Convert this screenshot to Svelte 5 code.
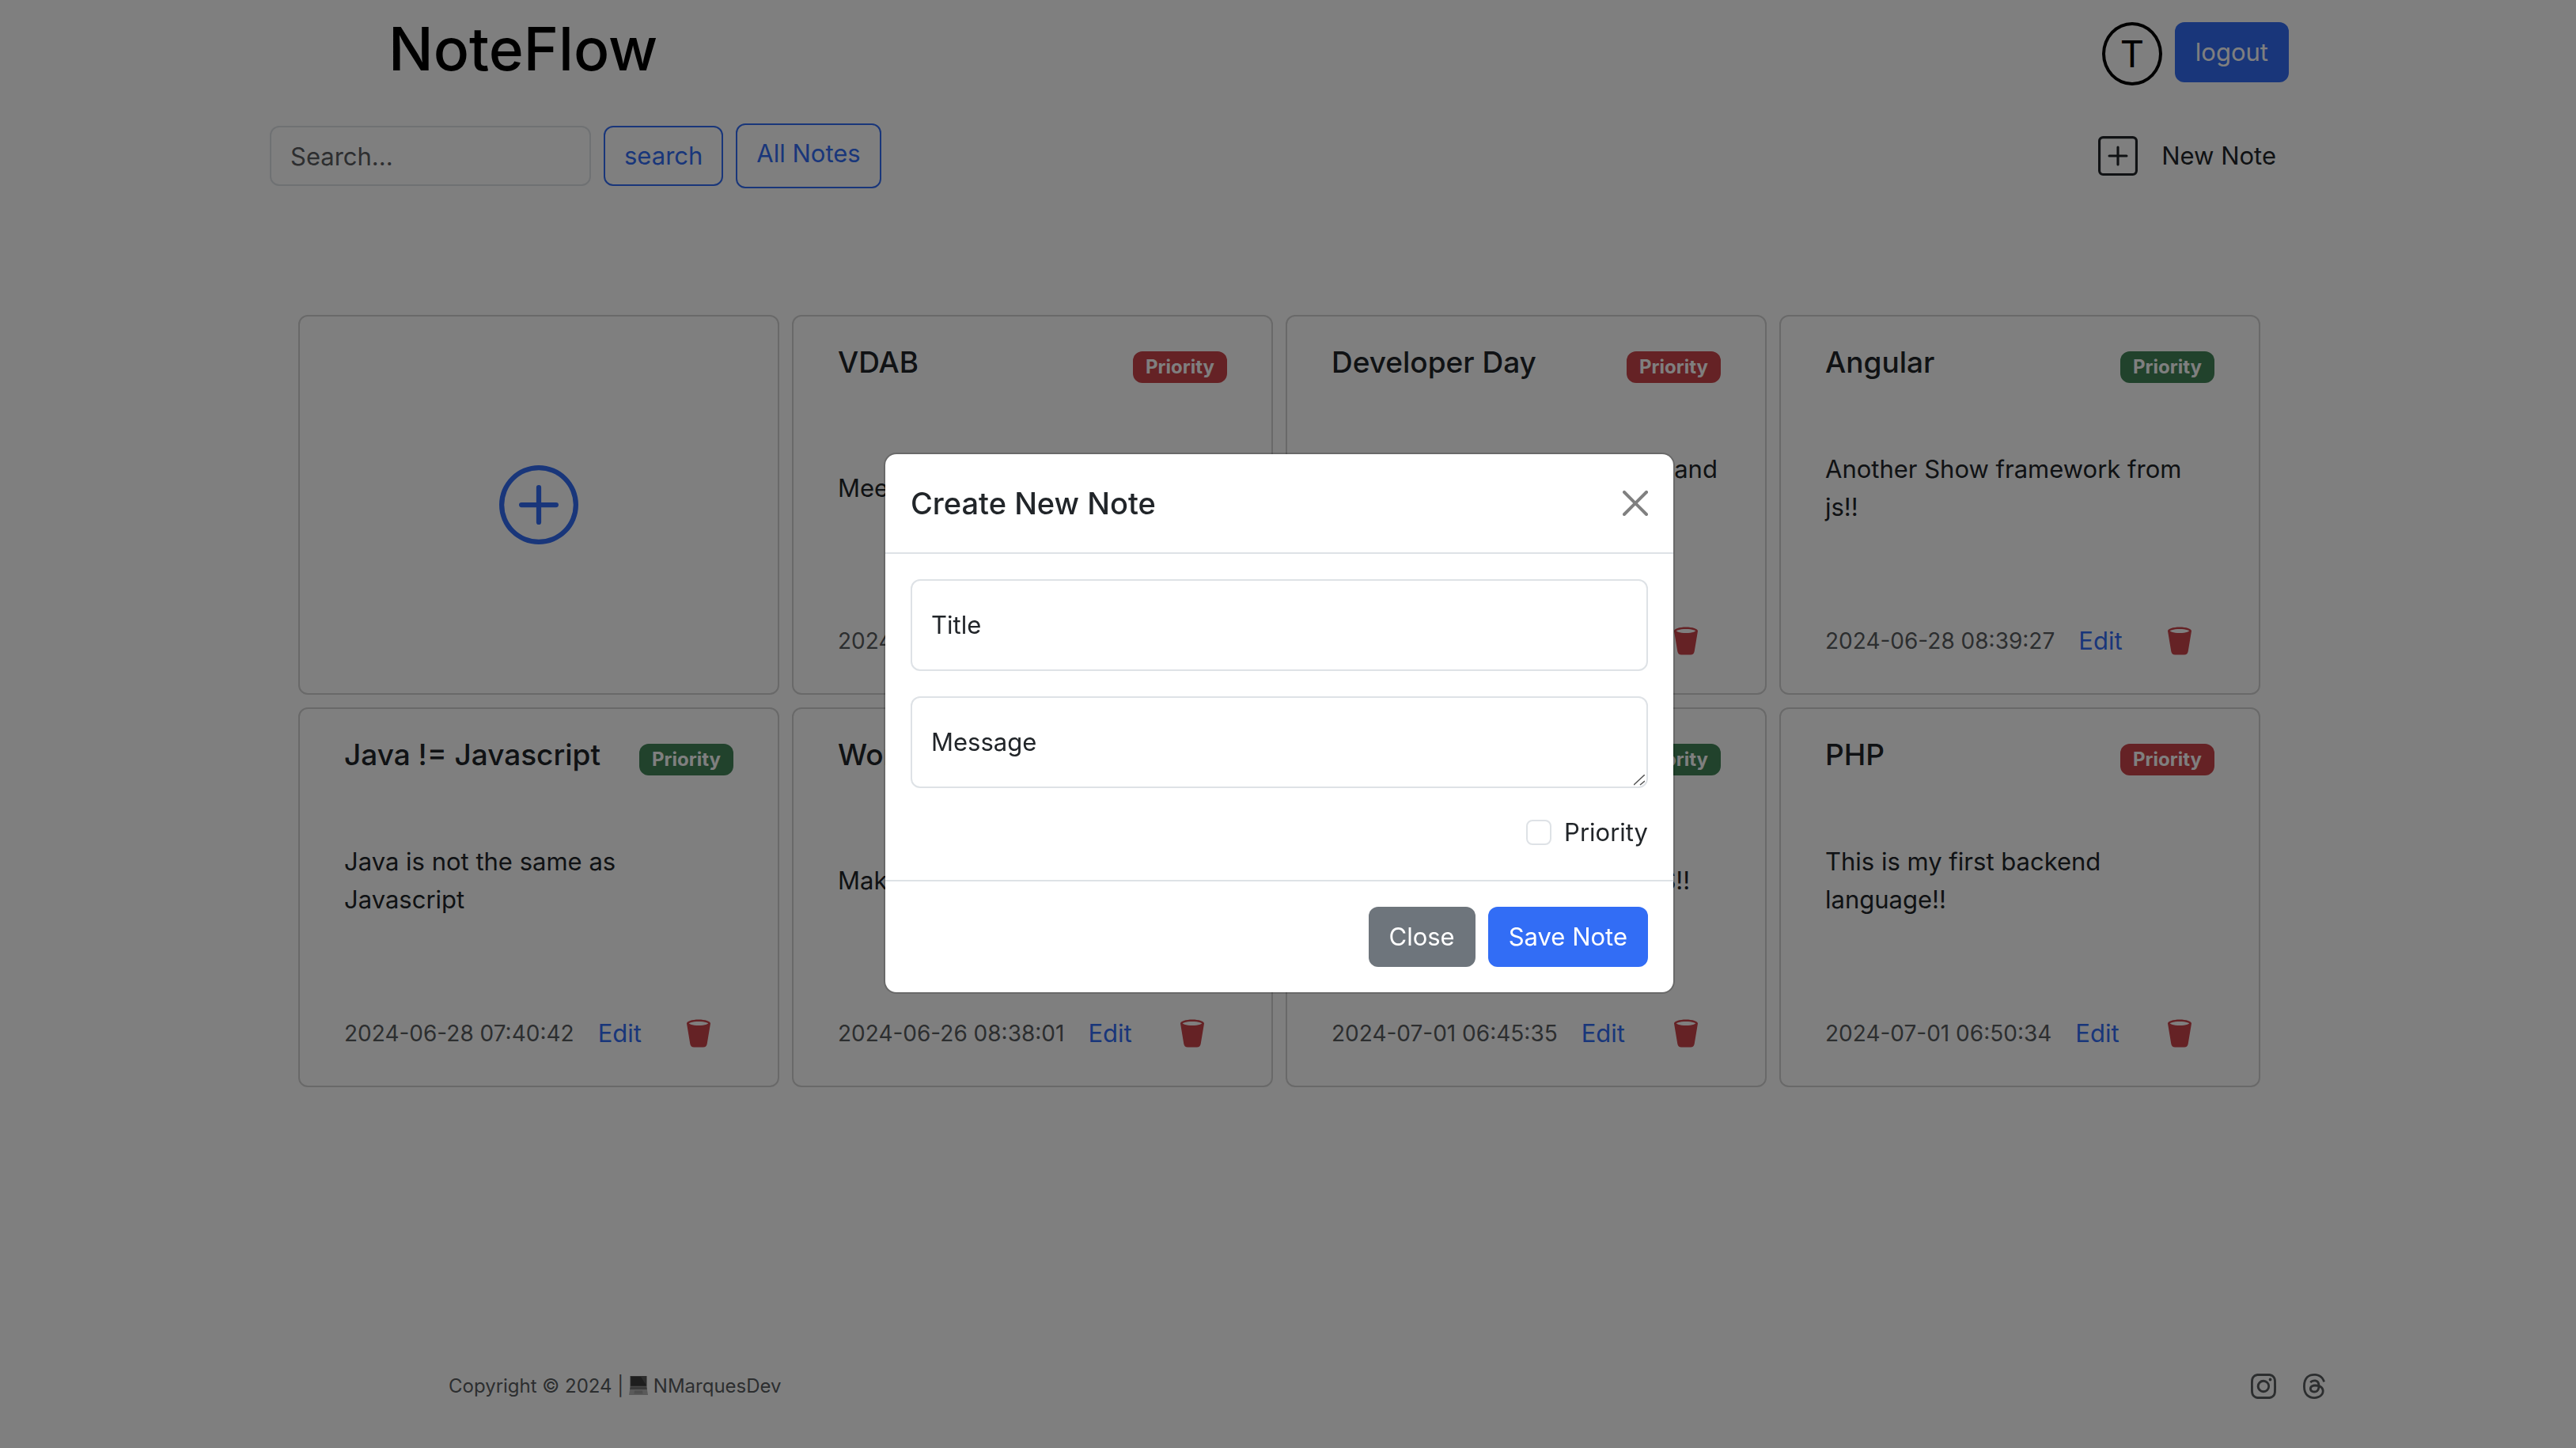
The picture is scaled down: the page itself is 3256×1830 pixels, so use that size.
<script>
  let title = $state('');
  let message = $state('');
  let priority = $state(false);
  let query = $state('');

  const notes = [
    { title: 'VDAB', level: 'high', text: 'Meeting with the coach', date: '2024-06-27 09:12:30' },
    { title: 'Developer Day', level: 'high', text: 'Meet other developers there, and learn new things', date: '2024-06-28 08:36:15' },
    { title: 'Angular', level: 'low', text: 'Another Show framework from js!!', date: '2024-06-28 08:39:27' },
    { title: 'Java != Javascript', level: 'low', text: 'Java is not the same as Javascript', date: '2024-06-28 07:40:42' },
    { title: 'Workout', level: 'high', text: 'Make time for the gym', date: '2024-06-26 08:38:01' },
    { title: 'NextJS', level: 'low', text: 'Rebuild the project on NextJS!!', date: '2024-07-01 06:45:35' },
    { title: 'PHP', level: 'high', text: 'This is my first backend language!!', date: '2024-07-01 06:50:34' }
  ];
</script>

<div class="page">
  <header class="container top">
    <h1>NoteFlow</h1>
    <div class="account">
      <span class="avatar">T</span>
      <button class="btn primary">logout</button>
    </div>
  </header>

  <div class="container toolbar">
    <form class="search">
      <input class="field" type="search" placeholder="Search..." aria-label="Search" bind:value={query} />
      <button class="btn outline" type="button">search</button>
      <a class="btn outline all" href="#all">All Notes</a>
    </form>
    <button class="new-note" type="button">
      <svg viewBox="0 0 16 16" aria-hidden="true">
        <path d="M14 1a1 1 0 0 1 1 1v12a1 1 0 0 1-1 1H2a1 1 0 0 1-1-1V2a1 1 0 0 1 1-1zM2 0a2 2 0 0 0-2 2v12a2 2 0 0 0 2 2h12a2 2 0 0 0 2-2V2a2 2 0 0 0-2-2z" />
        <path d="M8 4a.5.5 0 0 1 .5.5v3h3a.5.5 0 0 1 0 1h-3v3a.5.5 0 0 1-1 0v-3h-3a.5.5 0 0 1 0-1h3v-3A.5.5 0 0 1 8 4" />
      </svg>
      New Note
    </button>
  </div>

  <main class="container grid">
    <button class="card add" type="button" aria-label="Add note">
      <svg viewBox="0 0 16 16" aria-hidden="true">
        <path d="M8 15A7 7 0 1 1 8 1a7 7 0 0 1 0 14m0 1A8 8 0 1 0 8 0a8 8 0 0 0 0 16" />
        <path d="M8 4a.5.5 0 0 1 .5.5v3h3a.5.5 0 0 1 0 1h-3v3a.5.5 0 0 1-1 0v-3h-3a.5.5 0 0 1 0-1h3v-3A.5.5 0 0 1 8 4" />
      </svg>
    </button>
    {#each notes as note}
      <article class="card">
        <div class="card-head">
          <h2>{note.title}</h2>
          <span class="badge {note.level}">Priority</span>
        </div>
        <p>{note.text}</p>
        <div class="card-foot">
          <time>{note.date}</time>
          <a href="#edit">Edit</a>
          <button class="trash" type="button" aria-label="Delete note">
            <svg viewBox="0 0 16 16" aria-hidden="true">
              <path d="M2.037 3.225A.7.7 0 0 1 2 3c0-1.105 2.686-2 6-2s6 .895 6 2a.7.7 0 0 1-.037.225l-1.684 10.104A2 2 0 0 1 10.305 15h-4.61a2 2 0 0 1-1.973-1.671zm9.89-.69C10.966 2.214 9.578 2 8 2c-1.58 0-2.968.215-3.926.534-.477.16-.795.327-.975.466.18.14.498.307.975.466C5.032 3.786 6.42 4 8 4s2.967-.215 3.926-.534c.477-.16.795-.327.975-.466-.18-.14-.498-.307-.975-.466z" />
            </svg>
          </button>
        </div>
      </article>
    {/each}
  </main>

  <footer class="footer">
    <span class="copy">Copyright © 2024 |
      <svg class="laptop" viewBox="0 0 24 24" aria-hidden="true">
        <path d="M1.500 0H22.500V13.500H1.500z" fill="#5c5c5c" />
        <path d="M2.500 1H21.500V12.300H2.500z" fill="#3c3c3c" />
        <path d="M15 1H21.500V11z" fill="#5a5a5a" />
        <path d="M1.500 13.500H22.500L23 17.500H1z" fill="#757575" />
        <path d="M1 17.500H23L24 24H0z" fill="#b4b4b4" />
        <path d="M7 18.500H17L17.500 22.500H6.500z" fill="#9c9c9c" />
      </svg>
      NMarquesDev</span>
    <nav class="social">
      <a href="#instagram" aria-label="Instagram">
        <svg viewBox="0 0 16 16" aria-hidden="true">
          <path d="M8 0C5.829 0 5.556.01 4.703.048 3.850.088 3.269.222 2.760.420a3.900 3.900 0 0 0-1.417.923A3.900 3.900 0 0 0 .420 2.760C.222 3.268.087 3.850.048 4.700.010 5.555 0 5.827 0 8.001c0 2.172.010 2.444.048 3.297.040.852.174 1.433.372 1.942.205.526.478.972.923 1.417.444.445.890.719 1.416.923.510.198 1.090.333 1.942.372C5.555 15.990 5.827 16 8 16s2.444-.010 3.298-.048c.851-.040 1.434-.174 1.943-.372a3.900 3.900 0 0 0 1.416-.923c.445-.445.718-.891.923-1.417.197-.509.332-1.090.372-1.942C15.990 10.445 16 10.173 16 8s-.010-2.445-.048-3.299c-.040-.851-.175-1.433-.372-1.941a3.900 3.900 0 0 0-.923-1.417A3.900 3.900 0 0 0 13.240.420c-.510-.198-1.092-.333-1.943-.372C10.443.010 10.172 0 7.998 0zm-.717 1.442h.718c2.136 0 2.389.007 3.232.046.780.035 1.204.166 1.486.275.373.145.640.319.920.599s.453.546.598.920c.110.281.240.705.275 1.485.039.843.047 1.096.047 3.231s-.008 2.389-.047 3.232c-.035.780-.166 1.203-.275 1.485a2.500 2.500 0 0 1-.599.919c-.280.280-.546.453-.920.598-.280.110-.704.240-1.485.276-.843.038-1.096.047-3.232.047s-2.390-.009-3.233-.047c-.780-.036-1.203-.166-1.485-.276a2.500 2.500 0 0 1-.920-.598 2.500 2.500 0 0 1-.600-.920c-.109-.281-.240-.705-.275-1.485-.038-.843-.046-1.096-.046-3.233s.008-2.388.046-3.231c.036-.780.166-1.204.276-1.486.145-.373.319-.640.599-.920s.546-.453.920-.598c.282-.110.705-.240 1.485-.276.738-.034 1.024-.044 2.515-.045zm4.988 1.328a.960.960 0 1 0 0 1.920.960.960 0 0 0 0-1.920m-4.270 1.122a4.109 4.109 0 1 0 0 8.217 4.109 4.109 0 0 0 0-8.217m0 1.441a2.667 2.667 0 1 1 0 5.334 2.667 2.667 0 0 1 0-5.334" />
        </svg>
      </a>
      <a href="#threads" aria-label="Threads">
        <svg viewBox="0 0 16 16" aria-hidden="true">
          <path d="M6.321 6.016c-.270-.180-1.166-.802-1.166-.802.756-1.081 1.753-1.502 3.132-1.502.975 0 1.803.327 2.394.948s.928 1.509 1.005 2.644q.492.207.905.484c1.109.745 1.719 1.860 1.719 3.137 0 2.716-2.226 5.075-6.256 5.075C4.594 16 1 13.987 1 7.994 1 2.034 4.482 0 8.044 0 9.690 0 13.550.243 15 5.036l-1.360.353C12.516 1.974 10.163 1.430 8.006 1.430c-3.565 0-5.582 2.171-5.582 6.790 0 4.143 2.254 6.343 5.630 6.343 2.777 0 4.847-1.443 4.847-3.556 0-1.438-1.208-2.127-1.270-2.127-.236 1.234-.868 3.310-3.644 3.310-1.618 0-3.013-1.118-3.013-2.582 0-2.090 1.984-2.847 3.550-2.847.586 0 1.294.040 1.663.114 0-.637-.540-1.728-1.900-1.728-1.250 0-1.566.405-1.967.868ZM8.716 8.190c-2.040 0-2.304.870-2.304 1.416 0 .878 1.043 1.168 1.600 1.168 1.020 0 2.067-.282 2.232-2.423a6.200 6.200 0 0 0-1.528-.161" />
        </svg>
      </a>
    </nav>
  </footer>
</div>

<div class="backdrop"></div>

<div class="modal-wrap">
  <div class="modal" role="dialog" aria-modal="true" aria-labelledby="modal-title">
    <div class="modal-head">
      <h2 id="modal-title">Create New Note</h2>
      <button class="close" type="button" aria-label="Close dialog">
        <svg viewBox="0 0 16 16" aria-hidden="true">
          <path d="M.293.293a1 1 0 0 1 1.414 0L8 6.586 14.293.293a1 1 0 1 1 1.414 1.414L9.414 8l6.293 6.293a1 1 0 0 1-1.414 1.414L8 9.414l-6.293 6.293a1 1 0 0 1-1.414-1.414L6.586 8 .293 1.707a1 1 0 0 1 0-1.414" />
        </svg>
      </button>
    </div>
    <div class="modal-body">
      <div class="floating">
        <input id="title" type="text" bind:value={title} />
        {#if !title}<label for="title">Title</label>{/if}
      </div>
      <div class="floating">
        <textarea id="message" bind:value={message}></textarea>
        {#if !message}<label for="message">Message</label>{/if}
        <svg class="grip" viewBox="0 0 14 14" aria-hidden="true">
          <path d="M0 13L14 0M8 13L14 8" />
        </svg>
      </div>
      <div class="check">
        <input id="priority" type="checkbox" bind:checked={priority} />
        <label for="priority">Priority</label>
      </div>
    </div>
    <div class="modal-foot">
      <button class="btn secondary" type="button">Close</button>
      <button class="btn primary" type="button">Save Note</button>
    </div>
  </div>
</div>

<style>
  :global(body) {
    background: #fff;
    color: #212529;
    font-family: Inter, 'Liberation Sans', sans-serif;
    font-size: 31px;
    line-height: 48px;
  }
  * {
    box-sizing: border-box;
  }
  h1,
  h2,
  p {
    margin: 0;
    font-weight: 500;
  }
  p {
    font-weight: 400;
  }
  button,
  input,
  textarea {
    font: inherit;
    color: inherit;
    margin: 0;
  }
  button {
    background: none;
    border: 0;
    padding: 0;
  }
  a {
    text-decoration: none;
    color: #326df5;
  }
  svg {
    display: block;
    fill: currentColor;
  }

  /* The right padding stands in for the scrollbar while the dialog is open. */
  .page {
    min-height: 100vh;
    display: flex;
    flex-direction: column;
    padding-right: 22px;
  }
  .container {
    width: 100%;
    max-width: 2640px;
    margin: 0 auto;
  }

  .top {
    display: flex;
    justify-content: space-between;
    padding: 14px 44px 0 194px;
  }
  h1 {
    font-size: 75px;
    line-height: 96px;
    color: #000;
  }
  .account {
    display: flex;
    align-items: flex-start;
    gap: 16px;
    padding-top: 14px;
  }
  .avatar {
    width: 76px;
    height: 80px;
    border: 4px solid #000;
    border-radius: 50%;
    color: #000;
    font-size: 47px;
    line-height: 72px;
    text-align: center;
  }

  .btn {
    border: 2px solid transparent;
    border-radius: 12px;
    padding: 12px 24px;
    white-space: nowrap;
  }
  .primary {
    background: #326df5;
    color: #fff;
  }
  .secondary {
    background: #6e757c;
    color: #fff;
  }
  .outline {
    border-color: #326df5;
    color: #326df5;
  }
  .all {
    padding-bottom: 18px;
  }

  .toolbar {
    display: flex;
    justify-content: space-between;
    align-items: center;
    margin-top: 46px;
    padding: 0 60px 0 44px;
  }
  .search {
    display: flex;
    align-items: center;
    gap: 16px;
  }
  .field {
    width: 406px;
    height: 76px;
    border: 2px solid #dee2e6;
    border-radius: 12px;
    padding: 12px 24px;
    background: #fff;
  }
  .field::placeholder {
    color: #5a5d60;
    opacity: 1;
  }
  .new-note {
    display: flex;
    align-items: center;
    gap: 30px;
  }
  .new-note svg {
    width: 50px;
    height: 50px;
  }

  .grid {
    display: grid;
    grid-template-columns: repeat(4, 1fr);
    grid-auto-rows: minmax(480px, auto);
    gap: 16px;
    margin-top: 160px;
    padding: 0 80px;
  }
  .card {
    display: flex;
    flex-direction: column;
    border: 2px solid #d2d2d2;
    border-radius: 12px;
    padding: 32px 56px 6px;
  }
  .add {
    align-items: center;
    justify-content: center;
    padding: 0;
    color: #326df5;
  }
  .add svg {
    width: 100px;
    height: 100px;
  }
  .card-head {
    display: flex;
    justify-content: space-between;
    align-items: flex-start;
  }
  h2 {
    font-size: 37px;
    line-height: 52px;
  }
  .badge {
    margin-top: 12px;
    padding: 8px 16px;
    border-radius: 12px;
    color: #fff;
    font-size: 24px;
    font-weight: 700;
    line-height: 24px;
  }
  .high {
    background: #cb444a;
  }
  .low {
    background: #438559;
  }
  .card p {
    flex: 1;
    display: flex;
    align-items: center;
  }
  .card-foot {
    display: flex;
    align-items: center;
    gap: 30px;
    padding: 36px 24px 36px 0;
  }
  time {
    font-size: 28px;
    color: #595c5f;
    white-space: nowrap;
  }
  .trash {
    margin-left: auto;
    color: #cb444a;
  }
  .trash svg {
    width: 40px;
    height: 40px;
  }

  .footer {
    display: flex;
    justify-content: space-between;
    align-items: center;
    width: 100%;
    max-width: 2648px;
    margin: auto auto 0;
    padding: 0 0 54px 274px;
    color: #595c5f;
    font-size: 24px;
  }
  .laptop {
    display: inline-block;
    width: 24px;
    height: 24px;
    vertical-align: -3px;
  }
  .social {
    display: flex;
    gap: 32px;
  }
  .social a {
    color: #595c5f;
  }
  .social svg {
    width: 32px;
    height: 32px;
  }

  .backdrop {
    position: fixed;
    inset: 0;
    background: rgba(0, 0, 0, 0.5);
  }
  .modal-wrap {
    position: fixed;
    inset: 0;
    display: flex;
    align-items: center;
    justify-content: center;
    padding: 0 22px 2px 0;
  }
  .modal {
    width: 1000px;
    border: 2px solid rgba(0, 0, 0, 0.175);
    border-radius: 16px;
    background: #fff;
    background-clip: padding-box;
  }
  .modal-head {
    display: flex;
    justify-content: space-between;
    align-items: center;
    padding: 32px;
    border-bottom: 2px solid #dee2e6;
  }
  .modal-head h2 {
    font-size: 38px;
    line-height: 60px;
  }
  .close {
    color: #808080;
  }
  .close svg {
    width: 32px;
    height: 32px;
  }
  .modal-body {
    display: flex;
    flex-direction: column;
    gap: 32px;
    padding: 32px 32px 36px;
  }
  .floating {
    position: relative;
    display: flex;
  }
  .floating input,
  .floating textarea {
    width: 100%;
    height: 116px;
    border: 2px solid #dee2e6;
    border-radius: 12px;
    padding: 32px 24px;
    background: #fff;
    resize: none;
  }
  .floating label {
    position: absolute;
    top: 34px;
    left: 26px;
    pointer-events: none;
  }
  .grip {
    position: absolute;
    right: 4px;
    bottom: 3px;
    width: 14px;
    height: 14px;
    fill: none;
    stroke: #555;
    stroke-width: 1.5;
  }
  .check {
    display: flex;
    justify-content: flex-end;
    align-items: center;
    gap: 16px;
  }
  .check input {
    appearance: none;
    width: 32px;
    height: 32px;
    border: 2px solid #dee2e6;
    border-radius: 8px;
    background: #fff;
  }
  .check input:checked {
    background: #326df5;
  }
  .modal-foot {
    display: flex;
    justify-content: flex-end;
    gap: 16px;
    padding: 32px;
    border-top: 2px solid #dee2e6;
  }
</style>
